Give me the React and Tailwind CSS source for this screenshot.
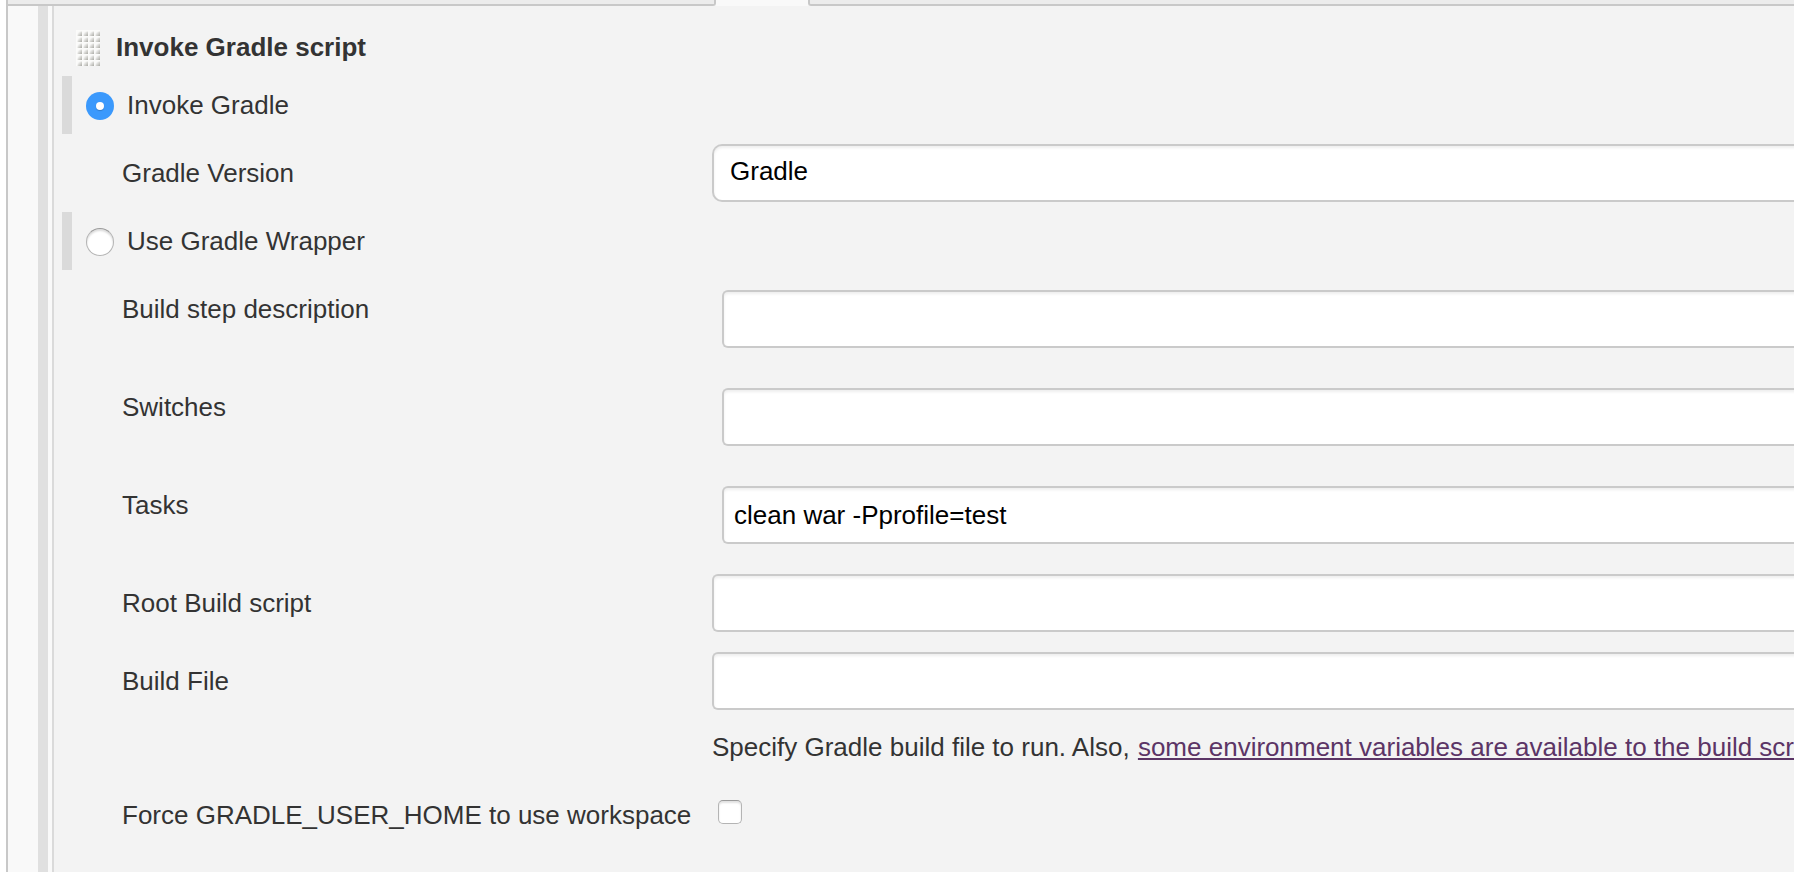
const FIELD =
  'h-[58px] flex-1 -mr-2 border-2 border-r-0 border-[#cacaca] bg-white text-black shadow-[inset_0_2px_3px_rgba(0,0,0,0.07)]';

function Label({ children }) {
  return <div className="mt-6 w-[590px] shrink-0 whitespace-nowrap">{children}</div>;
}

function Row({ label, tall = false, children }) {
  return (
    <div className={tall ? 'flex h-[98px] pl-[68px]' : 'flex h-[78px] pl-[68px]'}>
      <Label>{label}</Label>
      {children}
    </div>
  );
}

function RadioRow({ label, checked = false }) {
  return (
    <div className="flex h-[58px] pl-2">
      <span className="h-full w-[10px] bg-[#dadada]" />
      {checked ? (
        <span className="mt-4 ml-[14px] flex size-7 items-center justify-center rounded-full bg-[#3b99fc]">
          <span className="size-2 rounded-full bg-white shadow-[0_1px_1px_rgba(0,0,0,0.2)]" />
        </span>
      ) : (
        <span className="mt-4 ml-[14px] size-7 rounded-full border border-[#b4b4b4] border-t-[#9a9a9a] bg-white shadow-[inset_0_2px_2px_rgba(0,0,0,0.14)]" />
      )}
      <span className="mt-[14px] ml-[13px]">{label}</span>
    </div>
  );
}

function Handle() {
  return (
    <svg className="mt-6 shrink-0" width="24" height="36" viewBox="0 0 24 36">
      <defs>
        <linearGradient id="dot" x1="0" y1="0" x2="1" y2="1">
          <stop offset="0.2" stopColor="#f8f8f7" />
          <stop offset="1" stopColor="#a8a8a2" />
        </linearGradient>
      </defs>
      <rect width="24" height="36" fill="#fbfbfa" />
      {[0, 1, 2, 3, 4, 5].map((r) =>
        [0, 1, 2, 3].map((c) => (
          <rect key={`${r}-${c}`} x={c * 6 + 1.5} y={r * 6 + 1.5} width="4.5" height="4.5" fill="url(#dot)" />
        )),
      )}
    </svg>
  );
}

export default function App() {
  return (
    <div className="flex h-[872px] w-full overflow-hidden bg-white pl-[6px] font-['Liberation_Sans',Arial,sans-serif] text-[26px] leading-[30px] text-[#333333]">
      <div className="flex min-w-0 flex-1 flex-col border-l-2 border-[#c8c8c8] bg-[#f9f9f9]">
        <div className="flex h-[6px] shrink-0">
          <div className="w-[708px] rounded-br-[3px] border-r-2 border-b-2 border-[#c8c8c8] bg-[#ececec]" />
          <div className="w-[92px]" />
          <div className="flex-1 rounded-bl-[3px] border-b-2 border-l-2 border-[#c8c8c8] bg-[#ececec]" />
        </div>
        <div className="flex min-h-0 flex-1 pl-[30px]">
          <div className="w-[10px] shrink-0 bg-[#e0e0e0]" />
          <div className="ml-1 min-w-0 flex-1 border-l-2 border-[#dadada] bg-[#f3f3f3]">
            <div className="flex h-[70px] pl-[22px]">
              <Handle />
              <h1 className="mt-[26px] ml-4 font-bold">Invoke Gradle script</h1>
            </div>
            <RadioRow label="Invoke Gradle" checked />
            <Row label="Gradle Version">
              <div className={`${FIELD} mt-[10px] rounded-l-[10px] pt-[10px] pl-4`}>Gradle</div>
            </Row>
            <RadioRow label="Use Gradle Wrapper" />
            <Row label="Build step description" tall>
              <div className={`${FIELD} mt-5 ml-[10px] rounded-l-[6px]`} />
            </Row>
            <Row label="Switches" tall>
              <div className={`${FIELD} mt-5 ml-[10px] rounded-l-[6px]`} />
            </Row>
            <Row label="Tasks" tall>
              <div className={`${FIELD} mt-5 ml-[10px] rounded-l-[6px] pt-3 pl-[10px]`}>clean war -Pprofile=test</div>
            </Row>
            <Row label="Root Build script">
              <div className={`${FIELD} mt-[10px] rounded-l-[6px]`} />
            </Row>
            <Row label="Build File">
              <div className={`${FIELD} mt-[10px] rounded-l-[6px]`} />
            </Row>
            <div className="h-14 overflow-hidden pt-3 pl-[658px] whitespace-nowrap">
              Specify Gradle build file to run. Also,{' '}
              <a href="#" className="ml-px text-[#5c3566] underline decoration-2 underline-offset-[2px] [text-decoration-skip-ink:none]">
                some environment variables are available to the build script
              </a>
            </div>
            <Row label="Force GRADLE_USER_HOME to use workspace">
              <span className="mt-6 ml-[6px] size-6 rounded-[5px] border border-[#b4b4b4] border-t-[#9a9a9a] bg-white shadow-[inset_0_2px_2px_rgba(0,0,0,0.12)]" />
            </Row>
          </div>
        </div>
      </div>
    </div>
  );
}
